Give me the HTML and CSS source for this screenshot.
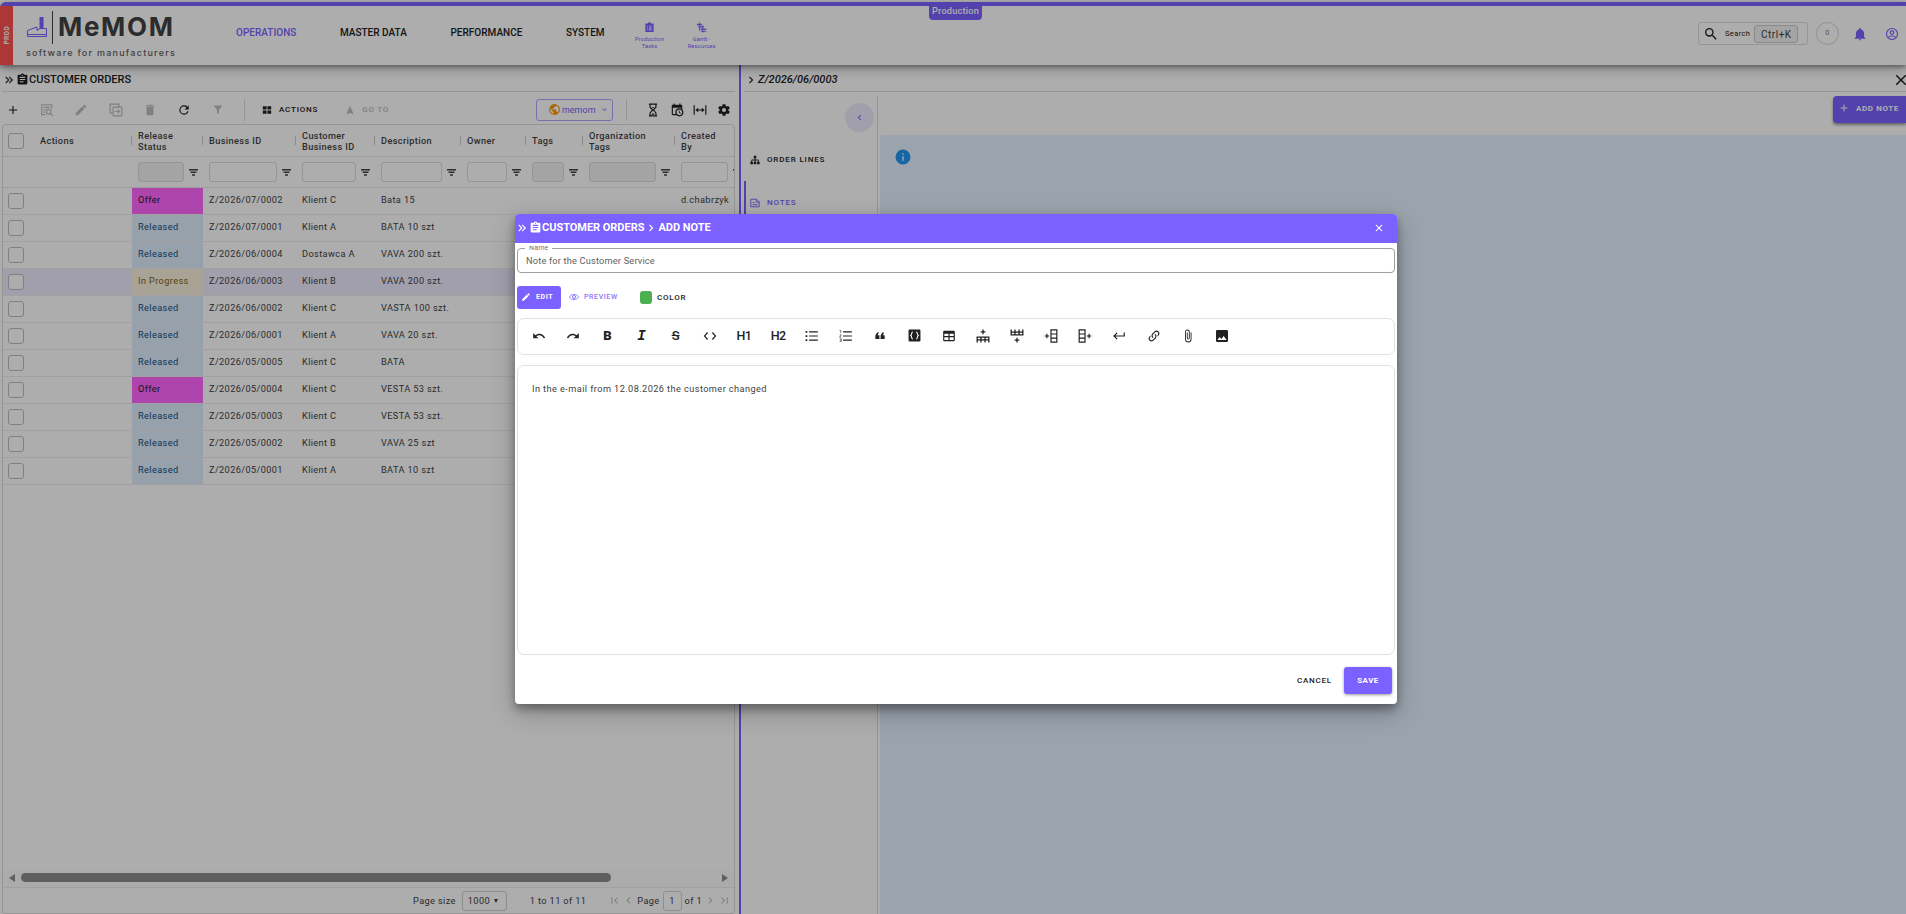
FILE: index.html
```
<!DOCTYPE html>
<html lang="en">
<head>
    <meta charset="UTF-8">
    <meta name="viewport" content="width=device-width, initial-scale=1.0">
    <title>MeMOM - Customer Orders</title>
    <link rel="stylesheet" href="styles.css">
</head>
<body>
    <svg class="sprite" width="0" height="0">
        <symbol id="plus" viewBox="0 0 24 24"><path d="M19,13H13V19H11V13H5V11H11V5H13V11H19V13Z"/></symbol>
        <symbol id="search-list" viewBox="0 0 24 24"><g fill="none" stroke="currentColor" stroke-width="2"><path d="M9,20H3V3H20V10"/><path d="M6,7.500H17M6,11.500H10M6,15.500H9"/><circle cx="15" cy="15" r="4"/><path d="M18,18L22,22"/></g></symbol>
        <symbol id="pencil" viewBox="0 0 24 24"><path d="M20.710,7.040C21.100,6.650 21.100,6 20.710,5.630L18.370,3.290C18,2.900 17.350,2.900 16.960,3.290L15.120,5.120L18.870,8.870M3,17.250V21H6.750L17.810,9.930L14.060,6.180L3,17.250Z"/></symbol>
        <symbol id="copy" viewBox="0 0 24 24"><g fill="none" stroke="currentColor" stroke-width="2"><path d="M17,7V2H2V17H6"/><rect x="7" y="7" width="15" height="15" rx="1"/><path d="M10,14.500H18M15,11.500L18,14.500L15,17.500"/></g></symbol>
        <symbol id="delete" viewBox="0 0 24 24"><path d="M6,19A2,2 0 0,0 8,21H16A2,2 0 0,0 18,19V7H6V19M19,4H15.500L14.500,3H9.500L8.500,4H5V6H19V4Z"/></symbol>
        <symbol id="refresh" viewBox="0 0 24 24"><path d="M17.650,6.350C16.200,4.900 14.210,4 12,4A8,8 0 0,0 4,12A8,8 0 0,0 12,20C15.730,20 18.840,17.450 19.730,14H17.650C16.830,16.330 14.610,18 12,18A6,6 0 0,1 6,12A6,6 0 0,1 12,6C13.660,6 15.140,6.690 16.220,7.780L13,11H20V4L17.650,6.350Z"/></symbol>
        <symbol id="filter" viewBox="0 0 24 24"><path d="M14,12V20L10,18V12L4,4V3H20V4Z"/></symbol>
        <symbol id="grid" viewBox="0 0 24 24"><path d="M2,11H11V3H2M2,21H11V13H2M13,21H22V13H13M13,3V11H22V3"/></symbol>
        <symbol id="navigation" viewBox="0 0 24 24"><path d="M12,2L3,22L12,19L21,22L12,2Z"/></symbol>
        <symbol id="earth" viewBox="0 0 24 24"><path d="M17.900,17.390C17.640,16.590 16.890,16 16,16H15V13A1,1 0 0,0 14,12H8V10H10A1,1 0 0,0 11,9V7H13A2,2 0 0,0 15,5V4.590C17.930,5.770 20,8.640 20,12C20,14.080 19.200,15.970 17.900,17.390M11,19.930C7.050,19.440 4,16.080 4,12C4,11.380 4.080,10.780 4.210,10.210L9,15V16A2,2 0 0,0 11,18M12,2A10,10 0 0,0 2,12A10,10 0 0,0 12,22A10,10 0 0,0 22,12A10,10 0 0,0 12,2Z"/></symbol>
        <symbol id="chevron-down" viewBox="0 0 24 24"><path d="M7.410,8.580L12,13.170L16.590,8.580L18,10L12,16L6,10L7.410,8.580Z"/></symbol>
        <symbol id="chevron-right" viewBox="0 0 24 24"><path d="M8.590,16.580L13.170,12L8.590,7.410L10,6L16,12L10,18L8.590,16.580Z"/></symbol>
        <symbol id="chevron-left" viewBox="0 0 24 24"><path d="M15.410,16.580L10.830,12L15.410,7.410L14,6L8,12L14,18L15.410,16.580Z"/></symbol>
        <symbol id="double-right" viewBox="0 0 24 24"><path d="M5.590,7.410L7,6L13,12L7,18L5.590,16.590L10.170,12L5.590,7.410M11.590,7.410L13,6L19,12L13,18L11.590,16.590L16.170,12L11.590,7.410Z"/></symbol>
        <symbol id="page-first" viewBox="0 0 24 24"><path d="M18.410,16.590L13.820,12L18.410,7.410L17,6L11,12L17,18L18.410,16.590M6,6H8V18H6V6Z"/></symbol>
        <symbol id="page-last" viewBox="0 0 24 24"><path d="M5.590,7.410L10.180,12L5.590,16.590L7,18L13,12L7,6L5.590,7.410M16,6H18V18H16V6Z"/></symbol>
        <symbol id="hourglass" viewBox="0 0 24 24"><path d="M5,1H19V3H18V7.500L14,12L18,16.500V21H19V23H5V21H6V16.500L10,12L6,7.500V3H5ZM8,3V7L12,11L16,7V3ZM12,13L8,17V21H16V17Z" fill-rule="evenodd"/><path d="M10,7H14L12,9ZM9,20L12,17L15,20Z"/></symbol>
        <symbol id="calendar-clock" viewBox="0 0 24 24"><path d="M15,13H16.500V15.820L18.940,17.230L18.190,18.530L15,16.690V13M19,8H5V19H9.670C9.240,18.090 9,17.070 9,16A7,7 0 0,1 16,9C17.070,9 18.090,9.240 19,9.670V8M5,21C3.890,21 3,20.100 3,19V5C3,3.890 3.890,3 5,3H6V1H8V3H16V1H18V3H19A2,2 0 0,1 21,5V11.100C22.240,12.360 23,14.090 23,16A7,7 0 0,1 16,23C14.090,23 12.360,22.240 11.100,21H5M16,11.150A4.850,4.850 0 0,0 11.150,16C11.150,18.680 13.320,20.850 16,20.850A4.850,4.850 0 0,0 20.850,16C20.850,13.320 18.680,11.150 16,11.150Z"/></symbol>
        <symbol id="fit-width" viewBox="0 0 24 24"><path d="M1,4H3V20H1ZM21,4H23V20H21ZM9,8V11H15V8L20,12L15,16V13H9V16L4,12Z"/></symbol>
        <symbol id="cog" viewBox="0 0 24 24"><path d="M12,15.500A3.500,3.500 0 0,1 8.500,12A3.500,3.500 0 0,1 12,8.500A3.500,3.500 0 0,1 15.500,12A3.500,3.500 0 0,1 12,15.500M19.430,12.970C19.470,12.650 19.500,12.330 19.500,12C19.500,11.670 19.470,11.340 19.430,11L21.540,9.370C21.730,9.220 21.780,8.950 21.660,8.730L19.660,5.270C19.540,5.050 19.270,4.960 19.050,5.050L16.560,6.050C16.040,5.660 15.500,5.320 14.870,5.070L14.500,2.420C14.460,2.180 14.250,2 14,2H10C9.750,2 9.540,2.180 9.500,2.420L9.130,5.070C8.500,5.320 7.960,5.660 7.440,6.050L4.950,5.050C4.730,4.960 4.460,5.050 4.340,5.270L2.340,8.730C2.210,8.950 2.270,9.220 2.460,9.370L4.570,11C4.530,11.340 4.500,11.670 4.500,12C4.500,12.330 4.530,12.650 4.570,12.970L2.460,14.630C2.270,14.780 2.210,15.050 2.340,15.270L4.340,18.730C4.460,18.950 4.730,19.030 4.950,18.950L7.440,17.940C7.960,18.340 8.500,18.680 9.130,18.930L9.500,21.580C9.540,21.820 9.750,22 10,22H14C14.250,22 14.460,21.820 14.500,21.580L14.870,18.930C15.500,18.670 16.040,18.340 16.560,17.940L19.050,18.950C19.270,19.030 19.540,18.950 19.660,18.730L21.660,15.270C21.780,15.050 21.730,14.780 21.540,14.630L19.430,12.970Z"/></symbol>
        <symbol id="magnify" viewBox="0 0 24 24"><path d="M9.500,3A6.500,6.500 0 0,1 16,9.500C16,11.110 15.410,12.590 14.440,13.730L14.710,14H15.500L20.500,19L19,20.500L14,15.500V14.710L13.730,14.440C12.590,15.410 11.110,16 9.500,16A6.500,6.500 0 0,1 3,9.500A6.500,6.500 0 0,1 9.500,3M9.500,5C7,5 5,7 5,9.500C5,12 7,14 9.500,14C12,14 14,12 14,9.500C14,7 12,5 9.500,5Z"/></symbol>
        <symbol id="bell" viewBox="0 0 24 24"><path d="M21,19V20H3V19L5,17V11C5,7.900 7.030,5.170 10,4.290C10,4.190 10,4.100 10,4A2,2 0 0,1 12,2A2,2 0 0,1 14,4C14,4.100 14,4.190 14,4.290C16.970,5.170 19,7.900 19,11V17L21,19M14,21A2,2 0 0,1 12,23A2,2 0 0,1 10,21"/></symbol>
        <symbol id="account" viewBox="0 0 24 24"><g fill="none" stroke="currentColor" stroke-width="2"><circle cx="12" cy="12" r="9.500"/><circle cx="12" cy="9.500" r="3"/><path d="M5.500,18C7,14.500 17,14.500 18.500,18"/></g></symbol>
        <symbol id="close" viewBox="0 0 24 24"><path d="M19,6.410L17.590,5L12,10.590L6.410,5L5,6.410L10.590,12L5,17.590L6.410,19L12,13.410L17.590,19L19,17.590L13.410,12L19,6.410Z"/></symbol>
        <symbol id="info" viewBox="0 0 24 24"><path d="M13,9H11V7H13M13,17H11V11H13M12,2A10,10 0 0,0 2,12A10,10 0 0,0 12,22A10,10 0 0,0 22,12A10,10 0 0,0 12,2Z"/></symbol>
        <symbol id="clipboard" viewBox="0 0 24 24"><path d="M17,9H7V7H17M17,13H7V11H17M14,17H7V15H14M12,3A1,1 0 0,1 13,4A1,1 0 0,1 12,5A1,1 0 0,1 11,4A1,1 0 0,1 12,3M19,3H14.820C14.400,1.840 13.300,1 12,1C10.700,1 9.600,1.840 9.180,3H5A2,2 0 0,0 3,5V19A2,2 0 0,0 5,21H19A2,2 0 0,0 21,19V5A2,2 0 0,0 19,3Z"/></symbol>
        <symbol id="clipboard-list" viewBox="0 0 24 24"><path fill-rule="evenodd" d="M3,3H9C9,0 15,0 15,3H21V22H3ZM7,8V10H9V8ZM11,8V10H17V8ZM7,12V14H9V12ZM11,12V14H17V12ZM7,16V18H9V16ZM11,16V18H17V16Z"/></symbol>
        <symbol id="gantt" viewBox="0 0 24 24"><path d="M7,1H9V19H7ZM2,4H13V7H2ZM5,9H17V12H5ZM10,14H23V17H10ZM14,7H16V23H14ZM11,19H22V21H11Z"/></symbol>
        <symbol id="sitemap" viewBox="0 0 24 24"><path d="M9,2V8H11V11H5C3.890,11 3,11.890 3,13V16H1V22H7V16H5V13H11V16H9V22H15V16H13V13H19V16H17V22H23V16H21V13C21,11.890 20.110,11 19,11H13V8H15V2H9Z"/></symbol>
        <symbol id="note" viewBox="0 0 24 24"><g fill="none" stroke="currentColor" stroke-width="2.200"><path d="M2,3H16L22,9V21H2Z"/><path d="M15,3V10H22M6,11H11M6,16H18"/></g></symbol>
        <symbol id="funnel" viewBox="0 0 9 7"><path d="M0,0H9V1.500H0ZM1.500,2.500H7.500V4H1.500ZM3,5.200H6V6.700H3Z"/></symbol>
        <symbol id="eye" viewBox="0 0 24 24"><g fill="none" stroke="currentColor" stroke-width="2"><path d="M1,12C5,3.500 19,3.500 23,12C19,20.500 5,20.500 1,12Z"/><circle cx="12" cy="12" r="4"/></g><circle cx="12" cy="12" r="1.500"/></symbol>
        <symbol id="undo" viewBox="0 0 24 24"><path d="M12.500,8C9.850,8 7.450,9 5.600,10.600L2,7V16H11L7.380,12.380C8.770,11.220 10.540,10.500 12.500,10.500C16.040,10.500 19.050,12.810 20.100,16L22.470,15.220C21.080,11.030 17.150,8 12.500,8Z"/></symbol>
        <symbol id="redo" viewBox="0 0 24 24"><path d="M18.400,10.600C16.550,9 14.150,8 11.500,8C6.850,8 2.920,11.030 1.540,15.220L3.900,16C4.950,12.810 7.950,10.500 11.500,10.500C13.450,10.500 15.230,11.220 16.620,12.380L13,16H22V7L18.400,10.600Z"/></symbol>
        <symbol id="code" viewBox="0 0 24 24"><path d="M8,6L2.500,12L8,18M16,6L21.500,12L16,18" fill="none" stroke="currentColor" stroke-width="2"/></symbol>
        <symbol id="bullets" viewBox="0 0 24 24"><path d="M7,4H22V6H7ZM7,11H22V13H7ZM7,18H22V20H7ZM1,3.500H4V6.500H1ZM1,10.500H4V13.500H1ZM1,17.500H4V20.500H1Z"/></symbol>
        <symbol id="numbers" viewBox="0 0 24 24"><path d="M7,4H22V6H7ZM7,11H22V13H7ZM7,18H22V20H7Z"/><path d="M1,2.500H3V7M1,10H4L1,14H4M1,17H4V21.500H1M2,19H4" fill="none" stroke="currentColor" stroke-width="1"/></symbol>
        <symbol id="quote" viewBox="0 0 24 24"><path d="M10,6L8,10.500H11V17H4V11L7,6H10M19,6L17,10.500H20V17H13V11L16,6H19Z"/></symbol>
        <symbol id="code-block" viewBox="0 0 24 24"><rect x="1" y="1" width="22" height="22" rx="2"/><path d="M9,5.500C5.500,5.500 8,10 5,12C8,14 5.500,18.500 9,18.500M15,5.500C18.500,5.500 16,10 19,12C16,14 18.500,18.500 15,18.500" fill="none" stroke="#fff" stroke-width="2"/></symbol>
        <symbol id="table" viewBox="0 0 24 24"><path d="M4,3H20A2,2 0 0,1 22,5V19A2,2 0 0,1 20,21H4A2,2 0 0,1 2,19V5A2,2 0 0,1 4,3M4,8V12H11V8H4M13,8V12H20V8H13M4,14V19H11V14H4M13,14V19H20V14H13Z"/></symbol>
        <symbol id="row-before" viewBox="0 0 24 24"><path d="M2,23V14H22V23M2,18.500H22M8.500,14V23M15.500,14V23M12,1V9M8,5H16" fill="none" stroke="currentColor" stroke-width="2.200"/></symbol>
        <symbol id="row-after" viewBox="0 0 24 24"><path d="M2,1V10H22V1M2,5.500H22M8.500,1V10M15.500,1V10M12,15V23M8,19H16" fill="none" stroke="currentColor" stroke-width="2.200"/></symbol>
        <symbol id="col-before" viewBox="0 0 24 24"><path d="M12,1.500H22V22.500H12ZM12,8.500H22M12,15.500H22M1,12H9M5,8V16" fill="none" stroke="currentColor" stroke-width="2"/></symbol>
        <symbol id="col-after" viewBox="0 0 24 24"><path d="M2,1.500H12V22.500H2ZM2,8.500H12M2,15.500H12M15,12H23M19,8V16" fill="none" stroke="currentColor" stroke-width="2"/></symbol>
        <symbol id="return" viewBox="0 0 24 24"><path d="M20,6V11H5.830L9.410,7.410L8,6L2,12L8,18L9.410,16.580L5.830,13H22V6H20Z"/></symbol>
        <symbol id="link" viewBox="0 0 24 24"><path d="M10.590,13.410C11,13.800 11,14.440 10.590,14.830C10.200,15.220 9.560,15.220 9.170,14.830C7.220,12.880 7.220,9.710 9.170,7.760V7.760L12.710,4.220C14.660,2.270 17.830,2.270 19.780,4.220C21.730,6.170 21.730,9.340 19.780,11.290L18.290,12.780C18.300,11.960 18.170,11.140 17.890,10.360L18.360,9.880C19.540,8.710 19.540,6.810 18.360,5.640C17.190,4.460 15.290,4.460 14.120,5.640L10.590,9.170C9.410,10.340 9.410,12.240 10.590,13.410M13.410,9.170C13.800,8.780 14.440,8.780 14.830,9.170C16.780,11.120 16.780,14.290 14.830,16.240V16.240L11.290,19.780C9.340,21.730 6.170,21.730 4.220,19.780C2.270,17.830 2.270,14.660 4.220,12.710L5.710,11.220C5.700,12.040 5.830,12.860 6.110,13.650L5.640,14.120C4.460,15.290 4.460,17.190 5.640,18.360C6.810,19.540 8.710,19.540 9.880,18.360L13.410,14.830C14.590,13.660 14.590,11.760 13.410,10.590C13,10.200 13,9.560 13.410,9.170Z"/></symbol>
        <symbol id="paperclip" viewBox="0 0 24 24"><path d="M16.500,6V17.500A4,4 0 0,1 12.500,21.500A4,4 0 0,1 8.500,17.500V5A2.500,2.500 0 0,1 11,2.500A2.500,2.500 0 0,1 13.500,5V15.500A1,1 0 0,1 12.500,16.500A1,1 0 0,1 11.500,15.500V6H10V15.500A2.500,2.500 0 0,0 12.500,18A2.500,2.500 0 0,0 15,15.500V5A4,4 0 0,0 11,1A4,4 0 0,0 7,5V17.500A5.500,5.500 0 0,0 12.500,23A5.500,5.500 0 0,0 18,17.500V6H16.500Z"/></symbol>
        <symbol id="image" viewBox="0 0 24 24"><path d="M8.500,13.500L11,16.500L14.500,12L19,18H5M21,19V5C21,3.890 20.100,3 19,3H5A2,2 0 0,0 3,5V19A2,2 0 0,0 5,21H19A2,2 0 0,0 21,19Z"/></symbol>
    </svg>

    <div class="app">
        <header class="topbar">
            <div class="env-strip"><span>PROD</span></div>
            <div class="logo">
                <div class="logo-row">
                    <svg class="factory" viewBox="0 0 20 20"><path d="M.500,19.500V13.500L10,10V13.500L13,11.500H19.500V19.500ZM.500,17.500H19.500" fill="none" stroke="#7b61ff"/><path d="M12.500,0H16.500V12H12.500Z" fill="#7b61ff"/></svg>
                    <span class="logo-bar"></span>
                    <span class="logo-name">MeMOM</span>
                </div>
                <div class="logo-tag">software for manufacturers</div>
            </div>
            <nav class="menu">
                <a class="active">OPERATIONS</a>
                <a>MASTER DATA</a>
                <a>PERFORMANCE</a>
                <a>SYSTEM</a>
            </nav>
            <div class="shortcuts">
                <a><svg><use href="#clipboard-list"/></svg><span>Production<br>Tasks</span></a>
                <a><svg><use href="#gantt"/></svg><span>Gantt -<br>Resources</span></a>
            </div>
            <div class="top-right">
                <div class="search"><svg><use href="#magnify"/></svg><span>Search</span><kbd>Ctrl+K</kbd></div>
                <div class="counter">0</div>
                <svg class="bell"><use href="#bell"/></svg>
                <svg class="user"><use href="#account"/></svg>
            </div>
            <div class="env-badge">Production</div>
        </header>

        <main class="split">
            <section class="left">
                <div class="pane-title"><svg class="i14"><use href="#double-right"/></svg><svg class="clip"><use href="#clipboard"/></svg><span>CUSTOMER ORDERS</span></div>
                <div class="toolbar">
                    <div class="tools">
                        <svg><use href="#plus"/></svg>
                        <svg class="off"><use href="#search-list"/></svg>
                        <svg class="off"><use href="#pencil"/></svg>
                        <svg class="off"><use href="#copy"/></svg>
                        <svg class="off"><use href="#delete"/></svg>
                        <svg><use href="#refresh"/></svg>
                        <svg class="off small"><use href="#filter"/></svg>
                    </div>
                    <span class="sep"></span>
                    <div class="tool-btn"><svg><use href="#grid"/></svg>ACTIONS</div>
                    <div class="tool-btn off goto"><svg><use href="#navigation"/></svg>GO TO</div>
                    <div class="tenant"><svg class="globe"><use href="#earth"/></svg><span>memom</span><svg class="down"><use href="#chevron-down"/></svg></div>
                    <span class="sep sep-2"></span>
                    <div class="view-tools">
                        <svg><use href="#hourglass"/></svg>
                        <svg><use href="#calendar-clock"/></svg>
                        <svg><use href="#fit-width"/></svg>
                        <svg><use href="#cog"/></svg>
                    </div>
                </div>

                <div class="grid">
                    <div class="row head">
                        <div><i class="check"></i></div><div>Actions</div><div>Release Status</div><div>Business ID</div><div>Customer Business ID</div><div>Description</div><div>Owner</div><div>Tags</div><div>Organization<br>Tags</div><div>Created<br>By</div>
                    </div>
                    <div class="row filters">
                        <div></div><div></div>
                        <div><i class="input grey"></i><svg><use href="#funnel"/></svg></div>
                        <div><i class="input"></i><svg><use href="#funnel"/></svg></div>
                        <div><i class="input"></i><svg><use href="#funnel"/></svg></div>
                        <div><i class="input"></i><svg><use href="#funnel"/></svg></div>
                        <div><i class="input"></i><svg><use href="#funnel"/></svg></div>
                        <div><i class="input grey"></i><svg><use href="#funnel"/></svg></div>
                        <div><i class="input grey"></i><svg><use href="#funnel"/></svg></div>
                        <div><i class="input"></i><svg><use href="#funnel"/></svg></div>
                    </div>
                    <div class="row"><div><i class="check"></i></div><div></div><div class="offer">Offer</div><div>Z/2026/07/0002</div><div>Klient C</div><div>Bata 15</div><div></div><div></div><div></div><div>d.chabrzyk</div></div>
                    <div class="row"><div><i class="check"></i></div><div></div><div class="released">Released</div><div>Z/2026/07/0001</div><div>Klient A</div><div>BATA 10 szt</div></div>
                    <div class="row"><div><i class="check"></i></div><div></div><div class="released">Released</div><div>Z/2026/06/0004</div><div>Dostawca A</div><div>VAVA 200 szt.</div></div>
                    <div class="row selected"><div><i class="check"></i></div><div></div><div class="progress">In Progress</div><div>Z/2026/06/0003</div><div>Klient B</div><div>VAVA 200 szt.</div></div>
                    <div class="row"><div><i class="check"></i></div><div></div><div class="released">Released</div><div>Z/2026/06/0002</div><div>Klient C</div><div>VASTA 100 szt.</div></div>
                    <div class="row"><div><i class="check"></i></div><div></div><div class="released">Released</div><div>Z/2026/06/0001</div><div>Klient A</div><div>VAVA 20 szt.</div></div>
                    <div class="row"><div><i class="check"></i></div><div></div><div class="released">Released</div><div>Z/2026/05/0005</div><div>Klient C</div><div>BATA</div></div>
                    <div class="row"><div><i class="check"></i></div><div></div><div class="offer">Offer</div><div>Z/2026/05/0004</div><div>Klient C</div><div>VESTA 53 szt.</div></div>
                    <div class="row"><div><i class="check"></i></div><div></div><div class="released">Released</div><div>Z/2026/05/0003</div><div>Klient C</div><div>VESTA 53 szt.</div></div>
                    <div class="row"><div><i class="check"></i></div><div></div><div class="released">Released</div><div>Z/2026/05/0002</div><div>Klient B</div><div>VAVA 25 szt</div></div>
                    <div class="row"><div><i class="check"></i></div><div></div><div class="released">Released</div><div>Z/2026/05/0001</div><div>Klient A</div><div>BATA 10 szt</div></div>

                    <div class="hscroll"><i class="arrow-left"></i><i class="thumb"></i><i class="arrow-right"></i></div>
                    <div class="pager">
                        <span>Page size</span>
                        <div class="page-size">1000 <i></i></div>
                        <span class="summary">1 to 11 of 11</span>
                        <svg class="off"><use href="#page-first"/></svg>
                        <svg class="off prev"><use href="#chevron-left"/></svg>
                        <span>Page</span>
                        <div class="page-no">1</div>
                        <span>of 1</span>
                        <svg class="off next"><use href="#chevron-right"/></svg>
                        <svg class="off"><use href="#page-last"/></svg>
                    </div>
                </div>
            </section>

            <section class="right">
                <div class="pane-title detail"><svg class="i14"><use href="#chevron-right"/></svg><em>Z/2026/06/0003</em><svg class="pane-close"><use href="#close"/></svg></div>
                <div class="detail-body">
                    <aside class="side">
                        <div class="collapse"><svg><use href="#chevron-left"/></svg></div>
                        <a><svg><use href="#sitemap"/></svg>ORDER LINES</a>
                        <a class="active"><svg><use href="#note"/></svg>NOTES</a>
                    </aside>
                    <div class="notes">
                        <div class="notes-head"><div class="add-note"><svg><use href="#plus"/></svg>ADD NOTE</div></div>
                        <div class="notes-info"><svg><use href="#info"/></svg></div>
                    </div>
                </div>
            </section>
        </main>
    </div>

    <div class="overlay">
        <div class="dialog">
            <div class="dialog-title">
                <svg class="i14"><use href="#double-right"/></svg><svg class="clip"><use href="#clipboard"/></svg><span>CUSTOMER ORDERS</span><svg class="i14 crumb"><use href="#chevron-right"/></svg><span>ADD NOTE</span>
                <svg class="dialog-close"><use href="#close"/></svg>
            </div>
            <div class="dialog-body">
                <div class="field"><label>Name</label>Note for the Customer Service</div>
                <div class="modes">
                    <div class="edit"><svg><use href="#pencil"/></svg>EDIT</div>
                    <div class="preview"><svg><use href="#eye"/></svg>PREVIEW</div>
                    <div class="color"><i></i>COLOR</div>
                </div>
                <div class="format-bar">
                    <span><svg><use href="#undo"/></svg></span>
                    <span><svg><use href="#redo"/></svg></span>
                    <span class="bold">B</span>
                    <span class="italic">I</span>
                    <span class="strike">S</span>
                    <span><svg><use href="#code"/></svg></span>
                    <span class="heading">H1</span>
                    <span class="heading">H2</span>
                    <span><svg><use href="#bullets"/></svg></span>
                    <span><svg><use href="#numbers"/></svg></span>
                    <span><svg><use href="#quote"/></svg></span>
                    <span><svg class="s13"><use href="#code-block"/></svg></span>
                    <span><svg><use href="#table"/></svg></span>
                    <span><svg><use href="#row-before"/></svg></span>
                    <span><svg><use href="#row-after"/></svg></span>
                    <span><svg><use href="#col-before"/></svg></span>
                    <span><svg><use href="#col-after"/></svg></span>
                    <span><svg><use href="#return"/></svg></span>
                    <span><svg><use href="#link"/></svg></span>
                    <span><svg><use href="#paperclip"/></svg></span>
                    <span><svg class="s16"><use href="#image"/></svg></span>
                </div>
                <div class="editor">In the e-mail from 12.08.2026 the customer changed</div>
                <div class="dialog-actions">
                    <div class="cancel">CANCEL</div>
                    <div class="save">SAVE</div>
                </div>
            </div>
        </div>
    </div>
</body>
</html>
```
FILE: styles.css
```
* {
    box-sizing: border-box;
}

body {
    margin: 0;
    height: 914px;
    overflow: hidden;
    background-color: #fff;
    color: #212121;
    font-family: Roboto, sans-serif;
    font-size: 9.2px;
    letter-spacing: 0.38px;
}

svg {
    flex: none;
    fill: currentColor;
}

.sprite {
    position: absolute;
}

.off {
    color: #bdbdbd;
}

.app {
    display: flex;
    flex-direction: column;
    height: 912px;
    margin-top: 2px;
}

/* Top bar */
.topbar {
    position: relative;
    z-index: 2;
    display: flex;
    flex: none;
    height: 63px;
    border-top: 4px solid #7b61ff;
    border-top-left-radius: 6px;
    background-color: #fff;
    box-shadow: 0 2px 4px rgba(0, 0, 0, 0.35), 0 5px 12px rgba(0, 0, 0, 0.22);
}

.env-strip {
    display: flex;
    align-items: center;
    justify-content: center;
    width: 13px;
    margin-right: 12px;
    background-color: #ff5252;
    color: #fff;
    font-size: 6.5px;
    font-weight: 700;
}

.env-strip span {
    writing-mode: vertical-rl;
    transform: rotate(180deg);
}

.logo {
    width: 151px;
    padding-top: 5px;
    font-family: Inter, sans-serif;
}

.logo-row {
    display: flex;
    height: 33px;
}

.factory {
    width: 20px;
    height: 20px;
    margin: 6px 5px 0 2px;
}

.logo-bar {
    width: 1px;
    margin-right: 5px;
    background-color: #444;
}

.logo-name {
    color: #424242;
    font-size: 26px;
    font-weight: 700;
    letter-spacing: 1.7px;
    line-height: 32px;
}

.logo-tag {
    margin: 3px 0 0 1px;
    color: #616161;
    font-size: 9px;
    font-weight: 500;
    letter-spacing: 1.25px;
    line-height: 12px;
    white-space: nowrap;
}

.menu {
    display: flex;
    gap: 43.500px;
    margin-left: 60px;
    font-size: 10px;
    font-weight: 500;
    letter-spacing: 0.02px;
    line-height: 54px;
}

.menu .active {
    color: #7b61ff;
}

.shortcuts {
    display: flex;
    margin: 16px 0 0 19px;
    color: #7b61ff;
    font-size: 5.6px;
    letter-spacing: 0.2px;
    line-height: 7px;
    text-align: center;
}

.shortcuts a {
    display: flex;
    flex-direction: column;
    align-items: center;
    gap: 3px;
    width: 52px;
}

.shortcuts svg {
    width: 11px;
    height: 11px;
}

.top-right {
    display: flex;
    align-items: center;
    height: 55px;
    margin-left: auto;
    color: #7b61ff;
}

.search {
    display: flex;
    align-items: center;
    width: 110px;
    height: 23px;
    padding-left: 4px;
    border: 1px solid #dcdcdc;
    border-radius: 3px;
    color: #212121;
    font-size: 7.5px;
}

.search svg {
    width: 16px;
    height: 16px;
    margin-right: 6px;
}

.search kbd {
    width: 44px;
    height: 18px;
    margin-left: 4px;
    border: 1px solid #ccc;
    border-radius: 3px;
    background-color: #f2f2f2;
    color: #424242;
    font: 400 10px/17px Roboto, sans-serif;
    letter-spacing: 0.5px;
    text-align: center;
}

.counter {
    width: 23px;
    height: 23px;
    margin: 0 14px 0 8px;
    border: 1px solid #d5d5d5;
    border-radius: 50%;
    color: #757575;
    font-size: 7px;
    line-height: 20px;
    text-align: center;
}

.bell {
    width: 14px;
    height: 14px;
}

.user {
    width: 14px;
    height: 14px;
    margin: 0 7px 0 18px;
}

.env-badge {
    position: absolute;
    top: 0;
    left: 929px;
    width: 53px;
    height: 14px;
    border-radius: 0 0 4px 4px;
    background-color: #7b61ff;
    color: #fff;
    font-size: 9.200px;
    font-weight: 500;
    letter-spacing: 0.2px;
    line-height: 10px;
    text-align: center;
}

/* Panes */
.split {
    display: flex;
    flex: 1;
    min-height: 0;
}

.left {
    display: flex;
    flex-direction: column;
    width: 739px;
    padding: 0 4px 0 2px;
}

.right {
    display: flex;
    flex: 1;
    flex-direction: column;
    min-width: 0;
    padding-left: 3px;
    border-left: 2px solid #7b61ff;
}

.pane-title {
    display: flex;
    flex: none;
    align-items: center;
    height: 27px;
    padding-top: 3px;
    border-bottom: 1px solid #dcdcdc;
    font-size: 11px;
    font-weight: 500;
    letter-spacing: 0;
}

.i14 {
    width: 14px;
    height: 14px;
}

.clip {
    width: 13px;
    height: 13px;
}

.toolbar {
    display: flex;
    flex: none;
    align-items: center;
    height: 32px;
    padding-top: 3px;
}

.tools {
    display: flex;
    gap: 20.200px;
    width: 242px;
    padding-left: 4px;
}

.tools svg {
    width: 14px;
    height: 14px;
}

.tools .small {
    transform: scale(0.85);
}

.sep {
    width: 1px;
    height: 22px;
    background-color: #dcdcdc;
}

.tool-btn {
    display: flex;
    align-items: center;
    gap: 7px;
    margin-left: 17px;
    font-size: 8px;
    font-weight: 500;
    letter-spacing: 0.8px;
}

.tool-btn svg {
    width: 10px;
    height: 10px;
}

.goto {
    margin-left: 27px;
}

.tenant {
    display: flex;
    align-items: center;
    width: 77px;
    height: 22px;
    margin-left: auto;
    padding-left: 11px;
    border: 1px solid #b1a2ff;
    border-radius: 3px;
    color: #7b61ff;
    font-size: 9px;
    letter-spacing: 0;
}

.globe {
    width: 13px;
    height: 13px;
    margin-right: 1px;
    color: #ff9800;
}

.down {
    width: 9px;
    height: 9px;
    margin-left: 4px;
}

.sep-2 {
    margin-left: 13px;
}

.view-tools {
    display: flex;
    gap: 9.700px;
    margin: 0 4px 0 19px;
}

.view-tools svg {
    width: 14px;
    height: 14px;
}

/* Data grid */
.grid {
    display: flex;
    flex: 1;
    flex-direction: column;
    min-height: 0;
    overflow: hidden;
    border: 1px solid #dcdcdc;
    border-radius: 4px 4px 3px 3px;
}

.row {
    display: grid;
    flex: none;
    grid-template-columns: 31px 98px 71px 93px 79px 86px 65px 57px 92px 72px;
    height: 27px;
    border-bottom: 1px solid #ededed;
    color: #424242;
}

.row > div {
    padding-left: 6px;
    line-height: 23px;
    white-space: nowrap;
}

.row > div:first-child {
    padding: 5px 0 0 5px;
}

.check {
    display: block;
    width: 16px;
    height: 16px;
    border: 1px solid #bdbdbd;
    border-radius: 3px;
    background-color: #fff;
}

.row.head {
    height: 32px;
    border-bottom: 1px dotted #cfcfcf;
    font-weight: 500;
}

.row.head > div {
    display: flex;
    position: relative;
    align-items: center;
    line-height: 11px;
    white-space: normal;
}

.row.head > div:first-child {
    padding-top: 0;
}

.row.head > div:nth-child(n+3)::before {
    content: "";
    position: absolute;
    left: -1px;
    width: 1px;
    height: 9px;
    background-color: #cfcfcf;
}

.row.filters {
    height: 31px;
    border-bottom: 1px dotted #cfcfcf;
}

.row.filters > div {
    display: flex;
    align-items: center;
    padding-right: 5px;
}

.row.filters svg {
    width: 9px;
    height: 7px;
    margin-left: 5px;
}

.input {
    flex: 1;
    height: 20px;
    border: 1px solid #dcdcdc;
    border-radius: 3px;
}

.input.grey {
    background-color: #f2f2f2;
}

.row .offer {
    background-color: #ff66ff;
    color: #212121;
}

.row .released {
    background-color: #deeefc;
    color: #0d4f86;
}

.row .progress {
    background-color: #f8f1dc;
    color: #806115;
}

.selected {
    background-color: #efebff;
}

.hscroll {
    display: flex;
    align-items: center;
    height: 17px;
    margin-top: auto;
    padding: 0 6px 2px;
    background-color: #fcfcfc;
}

.thumb {
    width: 590px;
    height: 9px;
    margin: 0 auto 0 6px;
    border-radius: 5px;
    background-color: #8b8b8b;
}

.arrow-left,
.arrow-right {
    border: 4px solid transparent;
}

.arrow-left {
    border-right: 6px solid #8b8b8b;
    border-left: 0;
}

.arrow-right {
    border-right: 0;
    border-left: 6px solid #8b8b8b;
}

.pager {
    display: flex;
    flex: none;
    align-items: center;
    justify-content: flex-end;
    height: 26px;
    padding-right: 3px;
    border-top: 1px solid #ededed;
    color: #424242;
}

.page-size {
    display: flex;
    align-items: center;
    width: 45px;
    height: 20px;
    margin: 0 23px 0 6px;
    padding-left: 5px;
    border: 1px solid #d0d0d0;
    border-radius: 3px;
}

.page-size i {
    margin-left: 4px;
    border: 2.500px solid transparent;
    border-top: 4px solid #424242;
    border-bottom: 0;
}

.summary {
    margin-right: 22px;
}

.pager svg {
    width: 13px;
    height: 13px;
}

.pager .prev {
    margin: 0 2px 0 1px;
}

.pager .next {
    margin: 0 1px 0 2px;
}

.page-no {
    width: 19px;
    height: 20px;
    margin: 0 3px;
    border: 1px solid #d0d0d0;
    border-radius: 3px;
    line-height: 18px;
    text-align: center;
}

/* Order detail */
.pane-close {
    width: 18px;
    height: 18px;
    margin: 0 -4px 0 auto;
}

.detail em {
    font-size: 11px;
}

.detail-body {
    display: flex;
    flex: 1;
    min-height: 0;
}

.side {
    width: 134px;
    margin-top: 4px;
    border-right: 1px solid #dcdcdc;
    font-size: 8px;
    font-weight: 500;
    letter-spacing: 0.85px;
}

.collapse {
    display: flex;
    align-items: center;
    justify-content: center;
    width: 29px;
    height: 29px;
    margin: 7px 3px 6px auto;
    border-radius: 50%;
    background-color: #efebff;
    color: #7b61ff;
}

.collapse svg {
    width: 11px;
    height: 11px;
}

.side a {
    display: flex;
    align-items: center;
    gap: 7px;
    height: 43px;
    padding-left: 6px;
}

.side a.active {
    padding-left: 4px;
    border-left: 2px solid #7b61ff;
    color: #7b61ff;
}

.side a svg {
    width: 10px;
    height: 10px;
}

.notes {
    display: flex;
    flex: 1;
    flex-direction: column;
    min-width: 0;
    padding: 4px 0 0 2px;
}

.notes-head {
    display: flex;
    justify-content: flex-end;
    height: 39px;
}

.add-note {
    display: flex;
    align-items: center;
    width: 73px;
    height: 27px;
    padding: 0 0 3px 5px;
    border-radius: 4px 0 0 4px;
    background-color: #7b61ff;
    box-shadow: 0 2px 3px rgba(0, 0, 0, 0.4);
    color: #fff;
    font-size: 8px;
    font-weight: 700;
    letter-spacing: 0.6px;
    white-space: nowrap;
}

.add-note svg {
    width: 12px;
    height: 12px;
    margin-right: 6px;
}

.notes-info {
    flex: 1;
    padding: 13px 14px;
    border-top-left-radius: 4px;
    background-color: #e5f1ff;
    color: #2196f3;
}

.notes-info svg {
    width: 18px;
    height: 18px;
}

/* Dialog */
.overlay {
    position: absolute;
    z-index: 10;
    inset: 0;
    padding: 214px 0 0 515px;
    background-color: rgba(0, 0, 0, 0.32);
}

.dialog {
    display: flex;
    flex-direction: column;
    width: 882px;
    height: 490px;
    border-radius: 4px;
    overflow: hidden;
    background-color: #fff;
    box-shadow: 0 5px 9px rgba(0, 0, 0, 0.3), 0 8px 24px rgba(0, 0, 0, 0.25);
}

.dialog-title {
    display: flex;
    flex: none;
    align-items: center;
    height: 29px;
    padding-bottom: 2px;
    background-color: #7b61ff;
    color: #fff;
    font-size: 11px;
    font-weight: 700;
    letter-spacing: -0.03px;
}

.dialog-close {
    width: 12px;
    height: 12px;
    margin: 0 12px 0 auto;
}

.dialog-body {
    display: flex;
    flex: 1;
    flex-direction: column;
    margin-top: 3px;
    padding: 2px 2px 0;
    overflow: hidden;
}

.field {
    position: relative;
    height: 25px;
    padding-left: 8px;
    border: 1px solid #9e9e9e;
    border-radius: 4px;
    color: #616161;
    letter-spacing: 0.2px;
    line-height: 24px;
}

.field label {
    position: absolute;
    top: -5px;
    left: 7px;
    padding: 0 4px;
    background-color: #fff;
    color: #757575;
    font-size: 7px;
    line-height: 8px;
}

.modes {
    display: flex;
    align-items: center;
    height: 23px;
    margin: 13px 0 9px;
    font-size: 7.500px;
    font-weight: 500;
    letter-spacing: 0.6px;
}

.modes div {
    display: flex;
    align-items: center;
}

.modes svg {
    width: 10px;
    height: 10px;
}

.modes .edit {
    gap: 5px;
    width: 44px;
    height: 23px;
    padding: 0 0 1px 4px;
    border-radius: 3px;
    background-color: #7b61ff;
    color: #fff;
    font-weight: 700;
    font-size: 7px;
}

.modes .preview {
    gap: 5px;
    width: 79px;
    padding: 0 0 1px 8px;
    color: #8a74ff;
    font-size: 7px;
}

.color {
    gap: 5px;
    font-size: 8px;
    letter-spacing: 0.8px;
}

.color i {
    width: 12px;
    height: 13px;
    border-radius: 3px;
    background-color: #4caf50;
}

.format-bar {
    display: flex;
    flex: none;
    align-items: center;
    height: 37px;
    margin-bottom: 10px;
    padding: 0 0 2px 4px;
    border: 1px solid #e0e0e0;
    border-radius: 7px;
}

.format-bar span {
    display: flex;
    align-items: center;
    justify-content: center;
    width: 34.150px;
    font-size: 12px;
    font-weight: 500;
    letter-spacing: 0;
}

.format-bar svg {
    width: 14px;
    height: 14px;
}

.format-bar .s13 {
    width: 13px;
    height: 13px;
}

.format-bar .s16 {
    width: 16px;
    height: 16px;
}

.format-bar .bold {
    font-weight: 900;
    font-size: 13px;
}

.format-bar .italic {
    font-family: "Liberation Mono", monospace;
    font-style: italic;
    font-weight: 700;
    font-size: 14px;
    line-height: 12px;
}

.format-bar .strike {
    font-size: 13px;
    text-decoration: line-through;
}

.format-bar .heading {
    letter-spacing: -0.6px;
    font-size: 12.500px;
}

.editor {
    flex: none;
    height: 290px;
    padding: 16px 14px;
    border: 1px solid #e0e0e0;
    border-radius: 7px;
    color: #424242;
    letter-spacing: 0.42px;
    line-height: 14px;
}

.dialog-actions {
    display: flex;
    justify-content: flex-end;
    margin-top: 12px;
    padding-right: 3px;
    font-size: 8px;
    font-weight: 500;
    letter-spacing: 0.8px;
    line-height: 27px;
}

.save {
    width: 48px;
    height: 27px;
    margin-left: 12px;
    border-radius: 3px;
    background-color: #7b61ff;
    box-shadow: 0 1px 3px rgba(0, 0, 0, 0.4);
    color: #fff;
    font-weight: 700;
    letter-spacing: 0.5px;
    text-align: center;
}
```
